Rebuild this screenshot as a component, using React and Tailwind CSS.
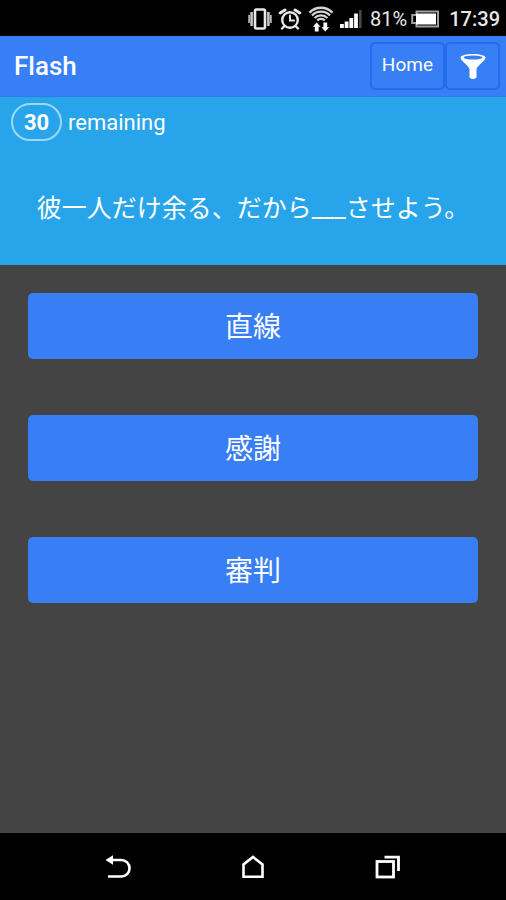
const QUESTION = '彼一人だけ余る、だから___させよう。'

const ANSWERS = ['直線', '感謝', '審判']

function VibrateIcon() {
  return (
    <svg width="24" height="22" viewBox="0 0 24 22" fill="none" stroke="#e8e8e8">
      <rect x="7" y="1.5" width="10" height="19" rx="1.5" strokeWidth="2.6" />
      <path d="M3.6 4v14M20.4 4v14" stroke="#c4c4c4" strokeWidth="2.6" />
      <path d="M1.2 7v8M22.8 7v8" stroke="#b0b0b0" strokeWidth="2" />
    </svg>
  )
}

function AlarmIcon() {
  return (
    <svg width="24" height="22" viewBox="0 0 24 22" fill="none" stroke="#e8e8e8" strokeLinecap="round">
      <circle cx="12" cy="12" r="7.8" strokeWidth="2.4" />
      <path d="M12 7.5V12.5H16" strokeWidth="2" />
      <path d="M2.2 5L7 2M21.8 5L17 2" strokeWidth="3" />
      <path d="M6 18.5L4 20.5M18 18.5L20 20.5" strokeWidth="2.4" />
    </svg>
  )
}

function WifiIcon() {
  return (
    <svg width="26" height="26" viewBox="0 0 26 26" fill="none" stroke="#d4d4d4">
      <path d="M1.5 6.6A16 16 0 0 1 24.5 6.6" strokeWidth="2.4" />
      <path d="M4 9.4A12.5 12.5 0 0 1 22 9.4" strokeWidth="2.2" />
      <path d="M6.6 12A9 9 0 0 1 19.4 12" strokeWidth="2.2" />
      <path d="M9.2 14.4A5.4 5.4 0 0 1 16.8 14.4" strokeWidth="2.2" />
      <path d="M8.7 16.5L12.6 20.8H10.6V25.5H6.8V20.8H4.8Z" fill="#fff" stroke="none" />
      <path d="M17.3 25.5L13.4 21.2H15.4V16.5H19.2V21.2H21.2Z" fill="#fff" stroke="none" />
    </svg>
  )
}

function SignalIcon() {
  return (
    <svg width="22" height="20" viewBox="0 0 22 20" fill="#fff">
      <rect x="0" y="15" width="3.8" height="4" />
      <rect x="4.7" y="12.5" width="3.8" height="6.5" />
      <rect x="9.4" y="9" width="3.8" height="10" />
      <rect x="14.1" y="4.5" width="3.8" height="14.5" />
      <rect x="19" y="1" width="2.6" height="18" fill="#484848" />
    </svg>
  )
}

function BatteryIcon() {
  return (
    <svg width="28" height="18" viewBox="0 0 28 18">
      <path d="M5.5 1.5H27V16.5H5.5V13H1.2V5H5.5Z" fill="none" stroke="#a0a0a0" strokeWidth="2" />
      <rect x="5" y="3.5" width="20" height="11" fill="#fff" />
    </svg>
  )
}

function FunnelIcon() {
  return (
    <svg width="26" height="27" viewBox="0 0 26 27">
      <path d="M.5 4.5C.5-.3 25.5-.3 25.5 4.5C25.5 8 16.5 13 16.5 16.5V24.5Q13 27.5 9.5 24.5V16.5C9.5 13 .5 8 .5 4.5Z" fill="#fff" />
      <ellipse cx="13" cy="4.5" rx="9.5" ry="2" fill="#387ef5" />
    </svg>
  )
}

function BackIcon() {
  return (
    <svg width="26" height="24" viewBox="0 0 26 24" fill="none" stroke="#fff" strokeWidth="2.6">
      <path d="M6 5H16.3A8.2 8.2 0 0 1 16.3 21.5H3" />
      <path d="M.5 5L8 .2V9.8Z" fill="#fff" stroke="none" />
    </svg>
  )
}

function HomeIcon() {
  return (
    <svg width="24" height="24" viewBox="0 0 24 24" fill="none" stroke="#fff" strokeWidth="2.6">
      <path d="M2.5 21.7V9.5L12 2L21.5 9.5V21.7Z" />
    </svg>
  )
}

function RecentsIcon() {
  return (
    <svg width="26" height="24" viewBox="0 0 26 24" fill="none" stroke="#fff" strokeWidth="2.8">
      <rect x="2" y="6.5" width="16.5" height="15.5" />
      <path d="M9.5 2.2H23.5V16" />
    </svg>
  )
}

function StatusBar() {
  return (
    <div className="flex h-9 items-center justify-end bg-black pr-1.5 pt-0.5 text-[20px] text-[#e8e8e8]">
      <div className="flex items-center gap-1.5">
        <VibrateIcon />
        <AlarmIcon />
        <WifiIcon />
        <SignalIcon />
      </div>
      <span className="ml-2">81%</span>
      <span className="ml-1"><BatteryIcon /></span>
      <span className="ml-2.5 font-medium">17:39</span>
    </div>
  )
}

function Header() {
  return (
    <header className="flex h-[61px] items-center justify-between border-b border-[#2f7be6] bg-[#387ef5] pl-3.5 pr-1.5">
      <h1 className="text-[26px] font-medium">Flash</h1>
      <div className="flex">
        <button className="h-12 rounded-[5px] border-2 border-[#246bed] px-2.5 pb-0.5 text-[19px]">
          Home
        </button>
        <button aria-label="Filter" className="flex h-12 w-[55px] items-center justify-center rounded-[5px] border-2 border-[#246bed]">
          <FunnelIcon />
        </button>
      </div>
    </header>
  )
}

export default function App() {
  return (
    <div className="flex min-h-screen flex-col bg-[#444444] font-['Roboto','Noto_Sans_CJK_JP',sans-serif] text-white">
      <StatusBar />
      <Header />

      <section className="h-[168px] bg-[#28a5ea] pt-1.5">
        <div className="flex items-center gap-1.5 px-[11px] text-[22px]">
          <span className="flex h-[38px] w-[51px] items-center justify-center rounded-full border-2 border-[#9fd7f7] font-bold">
            30
          </span>
          <span>remaining</span>
        </div>
        <p lang="ja" className="mt-12 text-center text-[25px] leading-[40px]">{QUESTION}</p>
      </section>

      <main className="flex flex-1 flex-col gap-14 px-7 pt-7">
        {ANSWERS.map(a => (
          <button key={a} lang="ja" className="h-[66px] rounded-[5px] bg-[#387ef5] pt-1 text-[28px]">
            {a}
          </button>
        ))}
      </main>

      <nav className="flex h-[67px] items-center justify-center gap-[110px] bg-black">
        <button aria-label="Back"><BackIcon /></button>
        <button aria-label="Home screen"><HomeIcon /></button>
        <button aria-label="Recent apps"><RecentsIcon /></button>
      </nav>
    </div>
  )
}
